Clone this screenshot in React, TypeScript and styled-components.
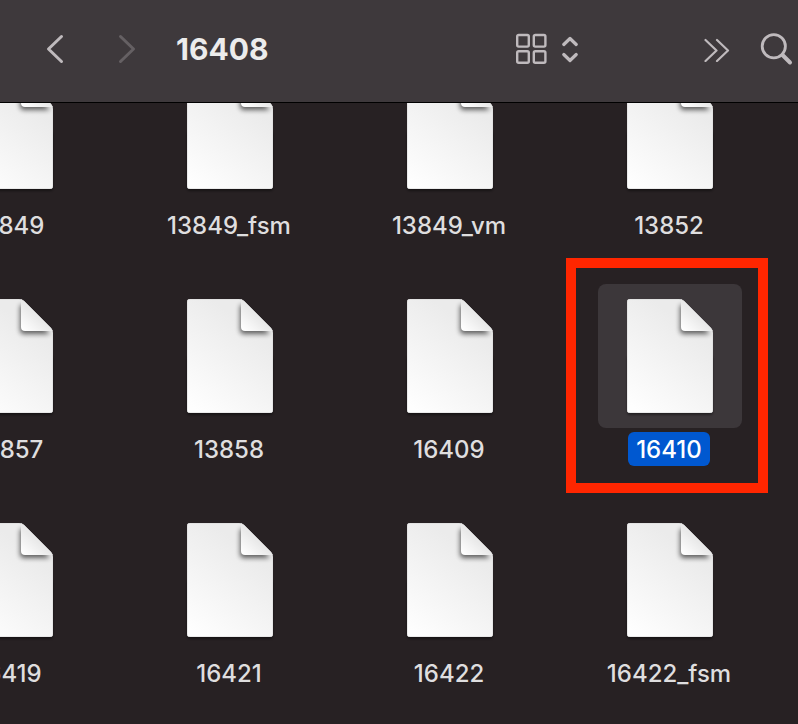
import React from "react";
import styled, { createGlobalStyle } from "styled-components";

const GlobalStyle = createGlobalStyle`
  *, *::before, *::after { box-sizing: border-box; }
  html, body, #root { height: 100%; }
  body {
    margin: 0;
    background: #272123;
    color: #dfdedf;
    font-family: Inter, "Liberation Sans", sans-serif;
    overflow: hidden;
  }
`;

const Window = styled.div`
  display: flex;
  flex-direction: column;
  height: 100%;
  overflow: hidden;
`;

const Toolbar = styled.header`
  display: flex;
  flex: none;
  align-items: center;
  height: 103px;
  padding: 0 4px 4px 36px;
  border-bottom: 1px solid #000;
  background: #3e393c;
`;

const ToolButton = styled.button<{ $dim?: boolean }>`
  display: flex;
  flex: none;
  align-items: center;
  justify-content: center;
  height: 40px;
  padding: 0;
  border: 0;
  background: none;
  color: ${(p) => (p.$dim ? "#656063" : "#bfbabd")};

  svg {
    display: block;
    fill: none;
    stroke: currentColor;
    stroke-linecap: round;
    stroke-linejoin: round;
  }
`;

const History = styled.nav`
  display: flex;
  gap: 32px;
`;

const Title = styled.h1`
  flex: 1;
  margin: 0 0 0 28px;
  color: #ececec;
  font-size: 30px;
  font-weight: 700;
  line-height: 40px;
`;

const Tools = styled.div`
  display: flex;
  flex: none;
  align-items: center;
`;

const ViewSwitch = styled(ToolButton)`
  gap: 14px;
  margin-right: 124px;
`;

const SearchButton = styled(ToolButton)`
  margin-left: 28px;
`;

const Content = styled.main`
  flex: 1;
  min-height: 0;
  overflow: hidden;
`;

const FileGrid = styled.ul`
  display: grid;
  grid-template-columns: repeat(4, 1fr);
  row-gap: 42px;
  margin: -43px 0 0 -100px;
  padding: 0 18px 0 0;
  list-style: none;
`;

const FileItem = styled.li`
  position: relative;
  display: flex;
  flex-direction: column;
  align-items: center;
  gap: 4px;
`;

const Thumb = styled.div<{ $selected?: boolean }>`
  display: flex;
  justify-content: center;
  width: 144px;
  height: 144px;
  padding-top: 12px;
  border-radius: 8px;
  background: ${(p) => (p.$selected ? "#3c373a" : "transparent")};
`;

const FileName = styled.span<{ $selected?: boolean }>`
  margin-right: 2px;
  padding: 2px 8px 0;
  border-radius: 6px;
  background: ${(p) => (p.$selected ? "#0058d0" : "transparent")};
  color: ${(p) => (p.$selected ? "#fff" : "inherit")};
  font-size: 24px;
  font-weight: 500;
  line-height: 32px;
`;

const Highlight = styled.div`
  position: absolute;
  inset: -26px 12px -27px 6px;
  border: 10px solid #ff2600;
  pointer-events: none;
`;

const DocumentIcon = () => (
  <svg width="96" height="124" viewBox="0 0 96 124" aria-hidden="true">
    <defs>
      <linearGradient id="page" gradientUnits="userSpaceOnUse" x1="12" y1="112" x2="72" y2="36">
        <stop offset="0" stopColor="#fefefe" />
        <stop offset="1" stopColor="#ebebeb" />
      </linearGradient>
      <linearGradient id="fold" gradientUnits="userSpaceOnUse" x1="61" y1="34" x2="74" y2="20">
        <stop offset="0" stopColor="#ffffff" />
        <stop offset="1" stopColor="#e9e9e9" />
      </linearGradient>
      <clipPath id="sheet">
        <path d="M8 3H57Q60 3 62 5L89 32Q91 34 91 37V114Q91 117 88 117H8Q5 117 5 114V6Q5 3 8 3Z" />
      </clipPath>
      <filter id="soft" x="-50%" y="-50%" width="200%" height="200%">
        <feGaussianBlur stdDeviation="2.5" />
      </filter>
      <filter id="drop" x="-10%" y="-10%" width="120%" height="120%">
        <feGaussianBlur stdDeviation="1" />
      </filter>
    </defs>
    <rect x="5" y="60" width="86" height="59" rx="3" fill="#000" opacity="0.4" filter="url(#drop)" />
    <g clipPath="url(#sheet)">
      <rect x="5" y="3" width="86" height="114" fill="url(#page)" />
      <path d="M58 10V34Q58 38 62 38H88L62 8Z" fill="#000" opacity="0.6" filter="url(#soft)" />
      <path d="M59 2V31Q59 35 63 35H92L60 2Z" fill="url(#fold)" />
      <path
        d="M8 3H57Q60 3 62 5L89 32Q91 34 91 37V114Q91 117 88 117H8Q5 117 5 114V6Q5 3 8 3Z"
        fill="none"
        stroke="#d8d8d8"
        strokeWidth="1"
      />
    </g>
  </svg>
);

const files = [
  "13849", "13849_fsm", "13849_vm", "13852",
  "13857", "13858", "16409", "16410",
  "16419", "16421", "16422", "16422_fsm",
];

const selectedFile = "16410";

export default function App() {
  return (
    <Window>
      <GlobalStyle />
      <Toolbar>
        <History aria-label="History">
          <ToolButton aria-label="Back">
            <svg width="40" height="40" viewBox="0 0 40 40" strokeWidth="3">
              <path d="M25.5 7.5L12.5 20L25.5 32.5" />
            </svg>
          </ToolButton>
          <ToolButton aria-label="Forward" $dim disabled>
            <svg width="40" height="40" viewBox="0 0 40 40" strokeWidth="3">
              <path d="M12.5 7.5L25.5 20L12.5 32.5" />
            </svg>
          </ToolButton>
        </History>
        <Title>16408</Title>
        <Tools>
          <ViewSwitch aria-label="View as icons">
            <svg width="32" height="32" viewBox="0 0 32 32" strokeWidth="2.4">
              <rect x="1.2" y="2" width="11.6" height="11.6" rx="1.5" />
              <rect x="17.8" y="2" width="11.6" height="11.6" rx="1.5" />
              <rect x="1.2" y="18.2" width="11.6" height="11.6" rx="1.5" />
              <rect x="17.8" y="18.2" width="11.6" height="11.6" rx="1.5" />
            </svg>
            <svg width="18" height="28" viewBox="0 0 18 28" strokeWidth="3.2">
              <path d="M1.8 9.5L8 3.5L14.2 9.5M1.8 19.5L8 25.5L14.2 19.5" />
            </svg>
          </ViewSwitch>
          <ToolButton aria-label="More toolbar items">
            <svg width="28" height="26" viewBox="0 0 28 26" strokeWidth="2.2">
              <path d="M1.5 4L12.5 14.5L1.5 25M13 4L24 14.5L13 25" />
            </svg>
          </ToolButton>
          <SearchButton aria-label="Search">
            <svg width="34" height="34" viewBox="0 0 34 34" strokeWidth="2.8">
              <circle cx="13.8" cy="14.2" r="11.6" />
              <path d="M22.5 23L30 30.5" strokeWidth="4" />
            </svg>
          </SearchButton>
        </Tools>
      </Toolbar>
      <Content>
        <FileGrid aria-label="Files">
          {files.map((name) => {
            const selected = name === selectedFile;
            return (
              <FileItem key={name}>
                <Thumb $selected={selected}>
                  <DocumentIcon />
                </Thumb>
                <FileName $selected={selected}>{name}</FileName>
                {selected && <Highlight />}
              </FileItem>
            );
          })}
        </FileGrid>
      </Content>
    </Window>
  );
}
